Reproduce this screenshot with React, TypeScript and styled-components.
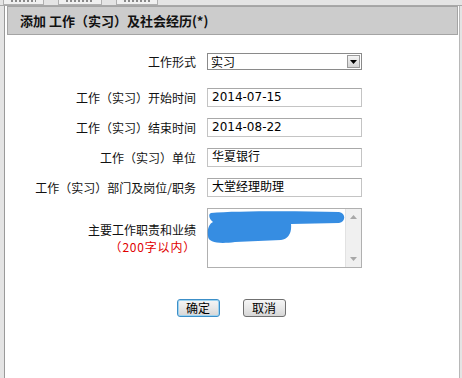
import React from 'react'
import styled, { createGlobalStyle } from 'styled-components'

const GlobalStyle = createGlobalStyle`
	html, body {
		margin: 0;
		padding: 0;
		background: #e4e4e4;
		font-family: "Noto Sans CJK SC", "DejaVu Sans", sans-serif;
	}
`

const Page = styled.div`
	width: 462px;
	height: 378px;
	overflow: hidden;
	background: #e4e4e4;
	display: flex;
	flex-direction: column;
`

const TabStrip = styled.div`
	height: 5px;
	display: flex;
	padding-left: 3px;
	gap: 14px;
	border-bottom: 1px solid #a8a8a8;
`

const TabStub = styled.div<{ $w: number }>`
	width: ${(p) => p.$w}px;
	height: 5px;
	border: 1px solid #b0b0b0;
	border-top: none;
	box-sizing: border-box;
	background: #f0f0f0;
	display: flex;
	justify-content: center;
	align-items: flex-start;

	&::after {
		content: '';
		width: ${(p) => p.$w - 16}px;
		height: 2px;
		background: repeating-linear-gradient(90deg, #444 0 2px, transparent 2px 4px);
		opacity: 0.6;
	}
`

const Frame = styled.div`
	flex: 1;
	margin-left: 4px;
	margin-right: 2px;
	background: #fff;
	border-left: 1px solid #9a9a9a;
	border-right: 1px solid #b8b8b8;
	padding: 0 1px 0 2px;
	display: flex;
	flex-direction: column;
`

const Header = styled.div`
	height: 27px;
	background: #cccccc;
	border: 1px solid #a4a4a4;
	display: flex;
	align-items: center;
	padding-left: 12px;
	font-size: 13px;
	font-weight: bold;
	color: #111;
`

const Form = styled.div`
	display: flex;
	flex-direction: column;
	gap: 11px;
	padding-top: 18px;
`

const Row = styled.div<{ $extra?: number }>`
	display: grid;
	grid-template-columns: 189px 155px;
	column-gap: 11px;
	align-items: center;
	margin-top: ${(p) => p.$extra || 0}px;
`

const Label = styled.div<{ $lh?: number }>`
	text-align: right;
	font-size: 12px;
	line-height: ${(p) => p.$lh || 15}px;
	color: #111;
`

const Note = styled.div`
	color: #e00000;
	letter-spacing: 0.8px;
`

const TextBox = styled.div`
	height: 19px;
	box-sizing: border-box;
	border: 1px solid #c4c4c4;
	border-top-color: #a8a8a8;
	padding: 0 4px;
	font-family: "DejaVu Sans", "Noto Sans CJK SC", sans-serif;
	font-size: 12px;
	line-height: 17px;
	color: #000;
`

const SelectBox = styled.div`
	height: 17px;
	box-sizing: border-box;
	border: 1px solid #8a8a8a;
	display: flex;
	align-items: center;
	justify-content: space-between;
	padding: 0 1px 0 3px;
	font-size: 12px;
	color: #000;
`

const SelectArrow = styled.div`
	width: 13px;
	height: 13px;
	box-sizing: border-box;
	border: 1px solid #9a9a9a;
	background: linear-gradient(#f4f4f4, #d4d4d4);
	display: flex;
	align-items: center;
	justify-content: center;
`

const AreaBox = styled.div`
	position: relative;
	height: 60px;
	box-sizing: border-box;
	border: 1px solid #b0b0b0;
	display: flex;
	justify-content: flex-end;
`

const Scrollbar = styled.div`
	width: 15px;
	background: #f0f0f0;
	border-left: 1px solid #e2e2e2;
	display: flex;
	flex-direction: column;
	justify-content: space-between;
	align-items: center;
	padding: 6px 0;
`

const Scribble = styled.svg`
	position: absolute;
	left: -3px;
	top: 0;
`

const Buttons = styled.div`
	display: flex;
	justify-content: center;
	gap: 23px;
	padding-top: 31px;
	padding-right: 3px;
`

const Button = styled.div<{ $focus?: boolean }>`
	width: 43px;
	height: 18px;
	box-sizing: border-box;
	border: 1px solid ${(p) => (p.$focus ? '#3c8fc8' : '#707070')};
	box-shadow: ${(p) => (p.$focus ? 'inset 0 0 0 1px #9ed3f0' : 'none')};
	border-radius: 3px;
	background: linear-gradient(#f6f6f6 0%, #e8e8e8 50%, #d6d6d6 100%);
	font-size: 12px;
	line-height: 16px;
	text-align: center;
	color: #000;
`

const Tri = ({ up }: { up?: boolean }) => (
	<svg width="7" height="4" viewBox="0 0 7 4">
		<path d={up ? 'M0 4 L7 4 L3.5 0 Z' : 'M0 0 L7 0 L3.5 4 Z'} fill="#a8a8a8" />
	</svg>
)

export default function App() {
	return (
		<>
			<GlobalStyle />
			<Page>
				<TabStrip>
					<TabStub $w={41} />
					<TabStub $w={44} />
					<TabStub $w={42} />
				</TabStrip>
				<Frame>
					<Header>添加 工作（实习）及社会经历(*)</Header>
					<Form>
						<Row>
							<Label>工作形式</Label>
							<SelectBox>
								实习
								<SelectArrow>
									<svg width="7" height="4" viewBox="0 0 7 4">
										<path d="M0 0 L7 0 L3.5 4 Z" fill="#000" />
									</svg>
								</SelectArrow>
							</SelectBox>
						</Row>
						<Row $extra={7}>
							<Label>工作（实习）开始时间</Label>
							<TextBox>2014-07-15</TextBox>
						</Row>
						<Row>
							<Label>工作（实习）结束时间</Label>
							<TextBox>2014-08-22</TextBox>
						</Row>
						<Row>
							<Label>工作（实习）单位</Label>
							<TextBox>华夏银行</TextBox>
						</Row>
						<Row>
							<Label>工作（实习）部门及岗位/职务</Label>
							<TextBox>大堂经理助理</TextBox>
						</Row>
						<Row>
							<Label $lh={17.5}>
								<div>主要工作职责和业绩</div>
								<Note>（200字以内）</Note>
							</Label>
							<AreaBox>
								<Scribble width="140" height="40" viewBox="0 0 140 40">
									<path
										d="M6 4 C30 2 90 2 134 3 C141 4 141 13 134 14 L86 15 C87 24 83 30 76 31 L30 33 C15 35 3 34 3 27 C2 20 4 15 8 13 C4 10 3 5 6 4 Z"
										fill="#368de2"
									/>
								</Scribble>
								<Scrollbar>
									<Tri up />
									<Tri />
								</Scrollbar>
							</AreaBox>
						</Row>
					</Form>
					<Buttons>
						<Button $focus>确定</Button>
						<Button>取消</Button>
					</Buttons>
				</Frame>
			</Page>
		</>
	)
}
